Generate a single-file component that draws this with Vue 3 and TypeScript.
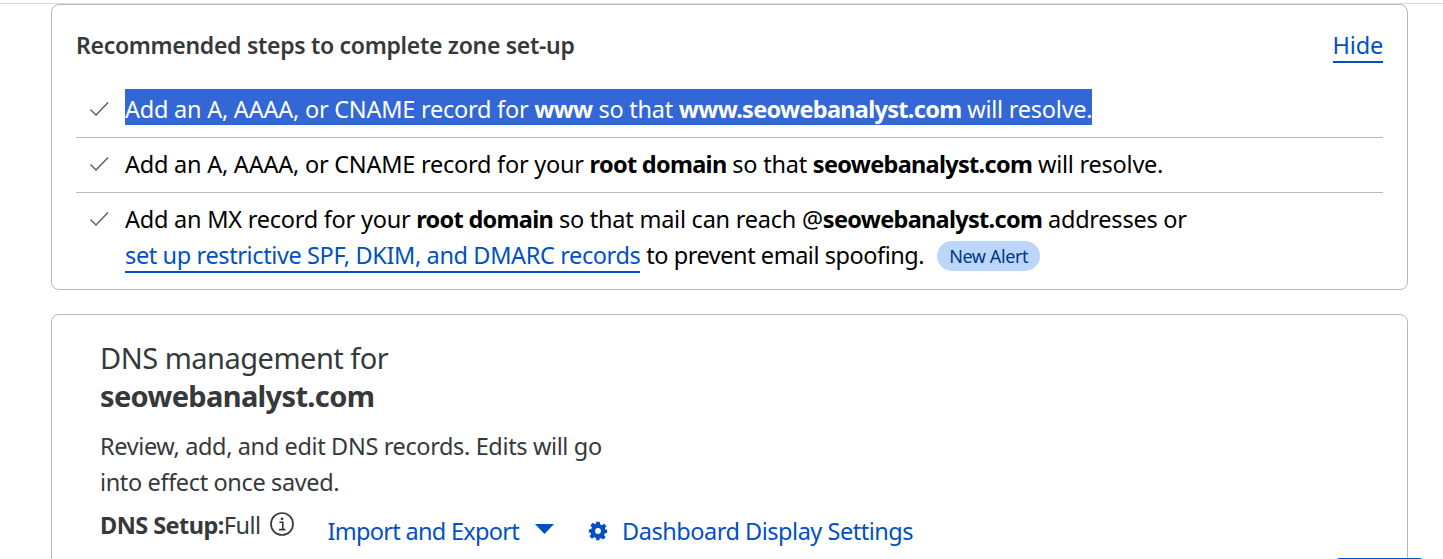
<script setup lang="ts">
const domain = 'seowebanalyst.com'
</script>

<template>
  <div class="page">
    <section class="card steps">
      <header class="steps-head">
        <h3>Recommended steps to complete zone set-up</h3>
        <a class="link underlined" href="#">Hide</a>
      </header>
      <ul class="steps-list">
        <li>
          <svg class="check" viewBox="0 0 20 16" width="20" height="16"><path d="M1.5 8.5 7 14 19 1.5" fill="none" stroke="#595959" stroke-width="1.3" /></svg>
          <p><span class="selected">Add an A, AAAA, or CNAME record for <b>www</b> so that <b>www.{{ domain }}</b> will resolve.</span></p>
        </li>
        <li>
          <svg class="check" viewBox="0 0 20 16" width="20" height="16"><path d="M1.5 8.5 7 14 19 1.5" fill="none" stroke="#595959" stroke-width="1.3" /></svg>
          <p>Add an A, AAAA, or CNAME record for your <b>root domain</b> so that <b>{{ domain }}</b> will resolve.</p>
        </li>
        <li>
          <svg class="check" viewBox="0 0 20 16" width="20" height="16"><path d="M1.5 8.5 7 14 19 1.5" fill="none" stroke="#595959" stroke-width="1.3" /></svg>
          <p>
            Add an MX record for your <b>root domain</b> so that mail can reach @<b>{{ domain }}</b> addresses or<br />
            <a class="link underlined" href="#">set up restrictive SPF, DKIM, and DMARC records</a> <span class="tail">to prevent email spoofing.</span>
            <span class="pill">New Alert</span>
          </p>
        </li>
      </ul>
    </section>

    <section class="card dns">
      <h2>DNS management for<br /><b>{{ domain }}</b></h2>
      <p class="intro">Review, add, and edit DNS records. Edits will go<br />into effect once saved.</p>
      <div class="actions">
        <div class="setup">
          <b>DNS Setup:</b>Full
          <svg class="info" viewBox="0 0 26 26" width="26" height="26">
            <circle cx="13" cy="13" r="11" fill="none" stroke="#36393a" stroke-width="1.7" />
            <circle cx="13" cy="7.8" r="1.4" fill="#36393a" />
            <path d="M10.4 11.2h3.4v7.2M10 18.6h6.4" fill="none" stroke="#36393a" stroke-width="1.6" />
          </svg>
        </div>
        <a class="link action import" href="#">
          Import and Export
          <svg class="caret" viewBox="0 0 19 10" width="19" height="10"><path d="M0 0h19L9.500 10z" fill="#0051c3" /></svg>
        </a>
        <a class="link action settings" href="#">
          <svg class="gear" viewBox="0 0 24 24" width="20" height="20">
            <path fill="#0051c3" fill-rule="evenodd" d="M10 1h4l.7 3.2 1.8.8 2.800-1.800 2.800 2.800-1.800 2.800.8 1.800L23 10.300v3.900l-2.900.7-.8 1.800 1.800 2.800-2.800 2.800-2.800-1.800-1.800.8L14 23h-4l-.7-2.800-1.800-.8-2.800 1.800-2.800-2.800 1.800-2.800-.8-1.800L1 14.200v-3.900l2.900-.7.8-1.800L2.900 5l2.800-2.800L8.500 4l1-.8zM12 8.500a3.500 3.500 0 1 0 0 7 3.500 3.500 0 0 0 0-7z" />
          </svg>
          Dashboard Display Settings
        </a>
      </div>
      <div class="footer-row"><button class="primary" type="button"></button></div>
    </section>
  </div>
</template>

<style scoped>
.page {
  height: 559px;
  overflow: hidden;
  box-sizing: border-box;
  padding: 4px 35px 0 51px;
  background: #fff;
  font-family: "Noto Sans", "Open Sans", "Liberation Sans", sans-serif;
  color: #36393a;
}
.card {
  border: 1px solid #b9b9b9;
  border-radius: 8px;
  box-sizing: border-box;
}
.steps {
  height: 286px;
  padding: 24px 24px 0;
}
.steps-head {
  display: flex;
  justify-content: space-between;
  align-items: flex-start;
  height: 50px;
}
h3 {
  margin: 0;
  font-size: 23px;
  line-height: 32px;
  font-weight: 600;
  letter-spacing: -0.3px;
}
.link {
  color: #0051c3;
  text-decoration: none;
}
.underlined {
  border-bottom: 2px solid #0051c3;
}
.steps-head .link {
  font-size: 23.5px;
  line-height: 32px;
  letter-spacing: -0.2px;
}
.steps-list {
  list-style: none;
  margin: 10px 0 0;
  padding: 0;
  color: #000;
  font-size: 23.5px;
  line-height: 36px;
  letter-spacing: -0.24px;
}
.steps-list li {
  display: flex;
  padding: 8px 0 10px 13px;
  border-bottom: 1px solid #b9b9b9;
}
.steps-list li:first-child {
  padding: 0 0 12px 13px;
}
.steps-list li:last-child {
  border-bottom: 0;
}
.check {
  flex: none;
  margin: 10px 16px 0 0;
}
.steps-list li:first-child .check {
  margin-top: 12px;
}
.steps-list p {
  margin: 0;
}
.steps-list b {
  font-weight: 700;
  letter-spacing: -0.7px;
}
.steps-list .link {
  letter-spacing: -0.38px;
}
.tail {
  letter-spacing: -0.46px;
}
.selected {
  display: block;
  width: fit-content;
  padding-top: 4px;
  line-height: 32px;
  background: #3367d6;
  color: #fff;
}
.pill {
  display: inline-block;
  margin-left: 13px;
  padding: 0 12px;
  border-radius: 15px;
  background: #bbd6fb;
  color: #003681;
  font-size: 18px;
  line-height: 30px;
  letter-spacing: -0.4px;
  vertical-align: 1px;
}
.dns {
  margin-top: 24px;
  height: 300px;
  padding: 24px 0 0 48px;
}
h2 {
  margin: 0;
  font-size: 29px;
  line-height: 38px;
  font-weight: 400;
  letter-spacing: -0.5px;
}
h2 b {
  font-weight: 700;
  letter-spacing: -0.65px;
}
.intro {
  margin: 13px 0 0;
  font-size: 23.5px;
  line-height: 36px;
  letter-spacing: -0.37px;
}
.actions {
  display: flex;
  align-items: center;
  margin-top: 13px;
  font-size: 23.5px;
  line-height: 36px;
  letter-spacing: -0.55px;
}
.setup {
  display: flex;
  align-items: center;
  margin-top: -12px;
}
.setup b {
  font-weight: 700;
}
.info {
  margin: -3px 0 0 9px;
}
.action {
  display: flex;
  align-items: center;
}
.import {
  margin-left: 32px;
  letter-spacing: -0.7px;
}
.caret {
  margin: -4px 0 0 16px;
}
.settings {
  margin-left: 34px;
  letter-spacing: -0.48px;
}
.gear {
  margin-right: 14px;
}
.footer-row {
  display: flex;
  justify-content: flex-end;
  margin: 0 -18px 0 0;
}
.primary {
  width: 91px;
  height: 40px;
  margin-top: 9px;
  border: 0;
  border-radius: 6px;
  background: #0051c3;
  padding: 0;
}
</style>

<style>
html, body { margin: 0; background: #fff; overflow: hidden; }
body::before {
  content: "";
  position: absolute;
  left: 0;
  right: 0;
  top: 3px;
  height: 1px;
  background: #dcdcdc;
}
</style>
